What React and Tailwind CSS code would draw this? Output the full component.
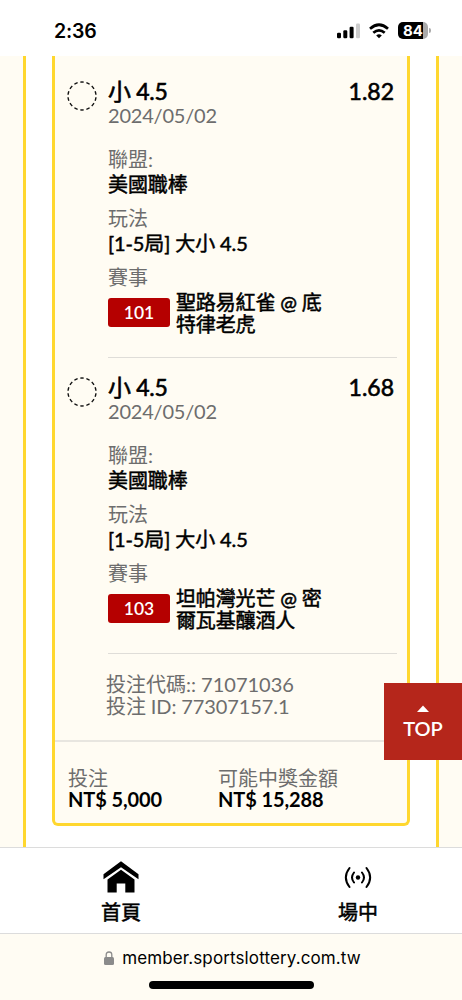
import React from "react";

const bets = [
  { code: "101", match: ["聖路易紅雀 @ 底", "特律老虎"], odds: "1.82" },
  { code: "103", match: ["坦帕灣光芒 @ 密", "爾瓦基釀酒人"], odds: "1.68" },
];

function StatusBar() {
  return (
    <header className="flex h-14 shrink-0 items-center justify-between bg-white pt-[5px] pr-[31px] pl-[54px]">
      <span className="font-['Inter'] text-[19.5px] leading-6 font-semibold tracking-[-0.2px]">2:36</span>
      <div className="flex items-center gap-[9px]">
        <svg className="-mr-px" width="24" height="16" viewBox="0 0 24 16">
          <rect x="0" y="9.8" width="4" height="5.5" rx="1.2" />
          <rect x="6.3" y="7.3" width="4" height="8" rx="1.2" />
          <rect x="12.6" y="3.8" width="4" height="11.5" rx="1.2" />
          <rect x="19" y="0.5" width="4" height="14.8" rx="1.2" fill="#ccc" />
        </svg>
        <svg width="20" height="16" viewBox="0 0 20 16" fill="none" stroke="#000" strokeWidth="2.7">
          <path d="M1 5.8 Q10 -2.3 19 5.8" />
          <path d="M4.3 9.8 Q10 4.8 15.7 9.8" />
          <path d="M10 15.2 L7.2 12.4 Q10 10.2 12.8 12.4Z" fill="#000" stroke="none" />
        </svg>
        <div className="flex items-center gap-px">
          <div className="flex h-[17px] w-[30px] items-center justify-center rounded-[5px] bg-[linear-gradient(90deg,#000_84%,#aaa_84%)] font-['Inter'] text-[15px] leading-none font-bold text-white">
            84
          </div>
          <div className="h-[5px] w-[2px] rounded-r-full bg-[#aaa]" />
        </div>
      </div>
    </header>
  );
}

function Field({ label, value }) {
  return (
    <div className="h-[59px]">
      <div className="h-[25px] text-[#6d6d6d]">{label}</div>
      <div className="tracking-[-0.1px] [-webkit-text-stroke:0.5px_#000]">{value}</div>
    </div>
  );
}

function Bet({ bet }) {
  return (
    <section className="flex h-[296px] pt-[19px] pr-[10px] pl-[12px]">
      <svg className="mr-[11px] shrink-0" width="30" height="32" viewBox="0 0 30 32" fill="none" stroke="#111" strokeWidth="1.4">
        <circle cx="15" cy="16" r="14" pathLength="98" strokeDasharray="4 3" strokeDashoffset="5.5" />
      </svg>
      <div className="flex h-[278px] flex-1 flex-col border-b border-[#dfddd8]">
        <div className="flex h-[24px] justify-between pr-[3px] text-[23px] leading-[23px]">
          <span className="tracking-[-0.3px] [-webkit-text-stroke:0.6px_#000]">小 4.5</span>
          <span className="[-webkit-text-stroke:0.6px_#000]">{bet.odds}</span>
        </div>
        <div className="h-[44px] tracking-[-0.2px] text-[#6d6d6d]">2024/05/02</div>
        <Field label="聯盟:" value="美國職棒" />
        <Field label="玩法" value="[1-5局] 大小 4.5" />
        <div className="text-[#6d6d6d]">賽事</div>
        <div className="flex items-center gap-[6px] pt-[3px]">
          <span className="mt-[-1px] flex h-[29px] w-[62px] items-center justify-center rounded-[3px] bg-[#b50000] text-[17.5px] font-semibold text-white">
            {bet.code}
          </span>
          <div className="tracking-[-0.15px] [-webkit-text-stroke:0.5px_#000]">
            {bet.match.map((line) => (
              <div key={line}>{line}</div>
            ))}
          </div>
        </div>
      </div>
    </section>
  );
}

function TopButton() {
  return (
    <button className="absolute top-[683px] right-0 flex h-[77px] w-[78px] flex-col items-center bg-[#b5261b] pt-[22px] text-white">
      <svg width="12" height="7" viewBox="0 0 12 7" fill="currentColor">
        <path d="M0 7 L6 0.5 L12 7Z" />
      </svg>
      <span className="mt-[5px] text-[20px] leading-[22px] font-semibold">TOP</span>
    </button>
  );
}

export default function App() {
  return (
    <div className="relative flex h-[1000px] w-[462px] flex-col overflow-hidden bg-white font-['Lato','Noto_Sans_CJK_TC',sans-serif] text-[20px] leading-[22px] text-black">
      <StatusBar />
      <main className="flex h-[791px] shrink-0">
        <div className="w-[26px] border-r-[3px] border-[#ffd72e] bg-[#fffcf3]" />
        <div className="flex-1 px-[26px]">
          <article className="h-[769.5px] rounded-b-[6px] border-x-[3px] border-b-[3px] border-[#ffd72e] bg-[#fffcf3]">
            <div className="h-[5px]" />
            {bets.map((bet) => (
              <Bet key={bet.code} bet={bet} />
            ))}
            <div className="h-[89px] border-b-2 border-[#e8e6e0] pt-[21px] pl-[51px] text-[#6d6d6d]">
              <div className="leading-[21.5px]">投注代碼:: 71071036</div>
              <div className="leading-[21.5px] tracking-[-0.1px]">投注 ID: 77307157.1</div>
            </div>
            <div className="grid grid-cols-[150px_1fr] pt-[25px] pl-[13px]">
              <div>
                <div className="h-[21px] text-[#6d6d6d]">投注</div>
                <div className="font-bold tracking-[-0.1px]">NT$ 5,000</div>
              </div>
              <div>
                <div className="h-[21px] text-[#6d6d6d]">可能中獎金額</div>
                <div className="font-bold tracking-[-0.1px]">NT$ 15,288</div>
              </div>
            </div>
          </article>
        </div>
        <div className="w-[26px] border-l-[3px] border-[#ffd72e] bg-[#fffcf3]" />
      </main>
      <nav className="flex h-[87px] shrink-0 justify-between border-y border-y-[#dcdcdc] pr-[84px] pl-[101px]">
        <a className="flex w-10 flex-col items-center pt-[13px]">
          <svg width="36" height="32" viewBox="0 0 36 32">
            <path d="M0.5 13.2 L18 0.3 L35.5 13.2 V18.3 L18 6.2 L0.5 18.3Z" />
            <path d="M4.5 18.4 L18 8.8 L31.5 18.4 V31.5 H22.3 V22.5 H13.7 V31.5 H4.5Z" />
          </svg>
          <span className="mt-[8px] [-webkit-text-stroke:0.5px_#000]">首頁</span>
        </a>
        <a className="flex w-10 flex-col items-center pt-[13px]">
          <svg width="28" height="32" viewBox="0 0 28 32" fill="none" stroke="#000" strokeWidth="2" strokeLinecap="round">
            <circle cx="14" cy="16.5" r="2.2" fill="#000" stroke="none" />
            <path d="M10 11.5 Q6 16.5 10 21.5 M18 11.5 Q22 16.5 18 21.5 M5.5 7 Q-1.8 16.5 5.5 26 M22.5 7 Q29.8 16.5 22.5 26" />
          </svg>
          <span className="mt-[8px] [-webkit-text-stroke:0.5px_#000]">場中</span>
        </a>
      </nav>
      <footer className="flex h-[66px] shrink-0 flex-col items-center bg-[#fffcf3] pt-[12px]">
        <div className="flex items-center gap-[8px] pl-[3px] font-['Inter'] text-[17px] leading-6 tracking-[0.12px]">
          <svg width="10" height="14" viewBox="0 0 10 14" fill="#8b8b8b">
            <rect y="6" width="10" height="8" rx="1.5" />
            <path d="M2.2 7 V3.8 Q2.2 1 5 1 Q7.8 1 7.8 3.8 V7" fill="none" stroke="#8b8b8b" strokeWidth="1.3" />
          </svg>
          <span>member.sportslottery.com.tw</span>
        </div>
        <div className="mt-[11px] h-[8px] w-[165px] rounded-full bg-black" />
      </footer>
      <TopButton />
    </div>
  );
}
